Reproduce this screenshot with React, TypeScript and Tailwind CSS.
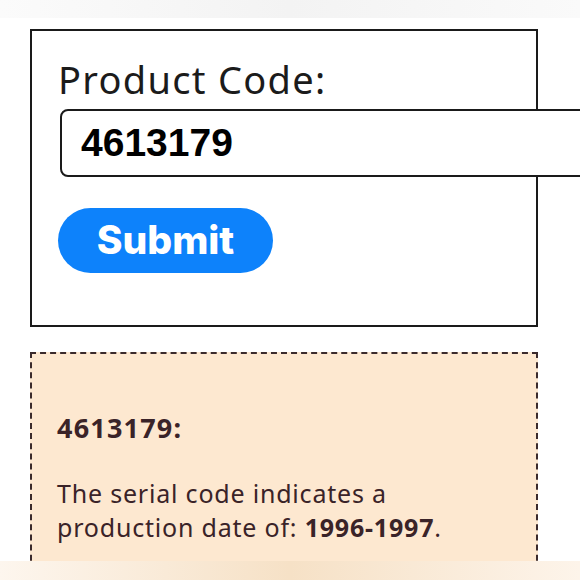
export default function App() {
  return (
    <div className="relative h-[580px] w-[580px] overflow-hidden bg-white">
      <div className="h-[18px] bg-gradient-to-r from-[#fbfbfb] via-[#f3f3f3] to-[#fafafa]" />

      <main className="flex flex-col gap-[25px] pl-[30px] pt-[11px]">
        <form className="flex h-[298px] w-[508px] flex-col border-2 border-[#1a1a1a] pl-[27px] pt-[25px]">
          <label className="-ml-[1px] font-['Noto_Sans',sans-serif] text-[38px] leading-[46px] tracking-[1.3px] text-[#1b1b1b]">
            Product Code:
          </label>
          <input
            readOnly
            value="4613179"
            className="relative z-10 ml-[1px] mt-[7px] h-[68px] w-[540px] shrink-0 rounded-[8px] border-2 border-[#1a1a1a] bg-white pl-[19px] font-['Liberation_Sans',sans-serif] text-[39px] font-bold text-black outline-none"
          />
          <button
            type="button"
            className="-ml-[1px] mt-[31px] h-[65px] w-[215px] rounded-full bg-[#0d82fb] font-['Inter',sans-serif] text-[39px] font-extrabold text-white"
          >
            Submit
          </button>
        </form>

        <section className="h-[300px] w-[508px] border-2 border-dashed border-[#3a2a2c] bg-[#fde8d0] pl-[25px] pt-[57px] font-['Noto_Sans',sans-serif] text-[#3a2328]">
          <h2 className="text-[27px] font-bold leading-[34px] tracking-[1.2px]">4613179:</h2>
          <p className="mt-[31px] text-[25px] leading-[34px] tracking-[0.8px]">
            The serial code indicates a
            <br />
            production date of: <strong className="font-bold">1996-1997</strong>.
          </p>
        </section>
      </main>

      <div className="absolute bottom-0 left-0 h-[19px] w-full bg-gradient-to-r from-[#fdf6ee] via-[#f6e1c6] to-[#fdf4ea]" />
    </div>
  );
}
